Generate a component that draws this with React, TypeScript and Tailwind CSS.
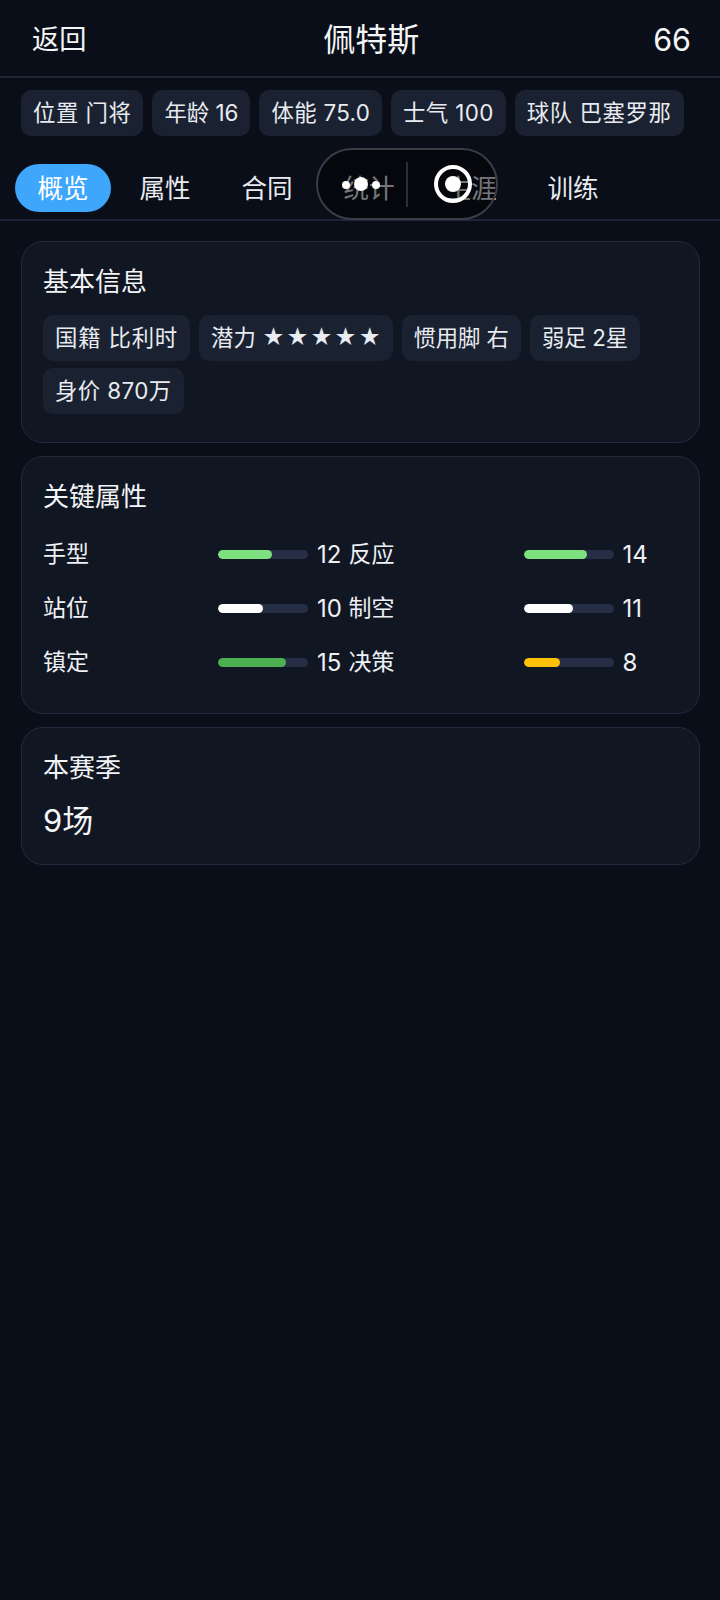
const font = { fontFamily: '"Inter", "Noto Sans CJK SC", sans-serif' };

function Chip({ children, tracking = "tracking-[0px]" }: { children: React.ReactNode; tracking?: string }) {
  return (
    <div className={`h-[46px] flex items-center px-3 rounded-[10px] bg-[#1a2232] text-[22.4px] text-[#e8ebf0] whitespace-pre ${tracking}`}>
      {children}
    </div>
  );
}

function Card({ title, children, className }: { title: string; children: React.ReactNode; className: string }) {
  return (
    <section className={`rounded-[22px] border-[1.5px] border-[#232a40] bg-[#111623] pl-[21px] pr-[20px] ${className}`}>
      <h2 className="text-[26px] leading-[38px] font-normal text-[#f2f4f7]">{title}</h2>
      {children}
    </section>
  );
}

function Stat({ label, value, pct, color }: { label: string; value: number; pct: number; color: string }) {
  return (
    <div className="flex items-center w-[305.5px] h-[54px] shrink-0">
      <span className="w-[175px] text-[23px] text-[#eef0f4]">{label}</span>
      <div className="w-[90px] h-[9px] rounded-full bg-[#262e45] overflow-hidden">
        <div className={`h-full rounded-full ${color}`} style={{ width: `${pct}%` }} />
      </div>
      <span className="ml-[9px] text-[24px] text-[#eef0f4]">{value}</span>
    </div>
  );
}

const tabs = ["概览", "属性", "合同", "统计", "生涯", "训练"];

export default function App() {
  return (
    <div style={font} className="relative min-h-[1600px] w-[720px] bg-[#0a0e18] text-white overflow-hidden">
      <header className="h-[78px] flex items-center justify-between pl-8 pr-[29px] pt-1 border-b-2 border-[#1e2538]">
        <span className="text-[27.2px] text-[#f4f5f7]">返回</span>
        <span className="text-[32px] ml-[3px] text-[#f4f5f7]">佩特斯</span>
        <span className="text-[30.5px] text-[#f4f5f7]">66</span>
      </header>

      <div className="flex gap-[9px] pl-[21px] pt-3">
        <Chip tracking="tracking-[0.5px]">位置 门将</Chip>
        <Chip tracking="tracking-[0px]">年龄 16</Chip>
        <Chip tracking="tracking-[0.3px]">体能 75.0</Chip>
        <Chip tracking="tracking-[0.35px]">士气 100</Chip>
        <Chip tracking="tracking-[0.6px]">球队 巴塞罗那</Chip>
      </div>

      <nav className="mt-[18px] h-[67px] pl-[15px] flex items-start gap-[6px] border-b-2 border-[#1e2538] pt-[10px]">
        {tabs.map((t, i) => (
          <div
            key={t}
            className={`h-[48px] w-[96px] flex items-center justify-center rounded-full text-[25.6px] pt-[2px] ${
              i === 0 ? "bg-[#3ea6fb] text-white" : "text-[#e8ebf0]"
            }`}
          >
            {t}
          </div>
        ))}
      </nav>

      <div className="absolute left-[316px] top-[148px] w-[182px] h-[72px] rounded-full border-2 border-[#3a3d46] bg-black/50">
        <svg width="180" height="68" viewBox="0 0 180 68" className="absolute left-0 top-0">
          <circle cx="28" cy="35" r="4" fill="#fff" />
          <circle cx="43" cy="34" r="7" fill="#fff" />
          <circle cx="58" cy="35" r="4" fill="#fff" />
          <line x1="89" y1="12" x2="89" y2="57" stroke="#3a3d46" strokeWidth="1.5" />
          <circle cx="135" cy="34" r="17" fill="none" stroke="#fff" strokeWidth="4" />
          <circle cx="135" cy="34" r="8" fill="#fff" />
        </svg>
      </div>

      <main className="pl-[21px] pr-[20px] pt-[20px] flex flex-col gap-[13px]">
        <Card title="基本信息" className="h-[202px] pt-[20.5px]">
          <div className="mt-[14px] flex flex-wrap gap-x-[9px] gap-y-[7px]">
            <Chip tracking="tracking-[0.8px]">国籍 比利时</Chip>
            <Chip>
              潜力 <span className="text-[21.5px] tracking-[1.6px] mr-[-2px]">★★★★★</span>
            </Chip>
            <Chip tracking="tracking-[-0.1px]">惯用脚 右</Chip>
            <Chip tracking="tracking-[-0.2px]">弱足 2星</Chip>
            <Chip tracking="tracking-[0.4px]">身价 870万</Chip>
          </div>
        </Card>

        <Card title="关键属性" className="h-[258px] pt-[20.5px]">
          <div className="mt-[12px] flex flex-wrap w-[640px]">
            <Stat label="手型" value={12} pct={60} color="bg-[#7fe07f]" />
            <Stat label="反应" value={14} pct={70} color="bg-[#7fe07f]" />
            <Stat label="站位" value={10} pct={50} color="bg-white" />
            <Stat label="制空" value={11} pct={55} color="bg-white" />
            <Stat label="镇定" value={15} pct={75} color="bg-[#4caf50]" />
            <Stat label="决策" value={8} pct={40} color="bg-[#ffc107]" />
          </div>
        </Card>

        <Card title="本赛季" className="h-[138px] pt-[20.5px]">
          <div className="mt-[12px] text-[31px] leading-[44px] text-[#f4f5f7]">9场</div>
        </Card>
      </main>
    </div>
  );
}
